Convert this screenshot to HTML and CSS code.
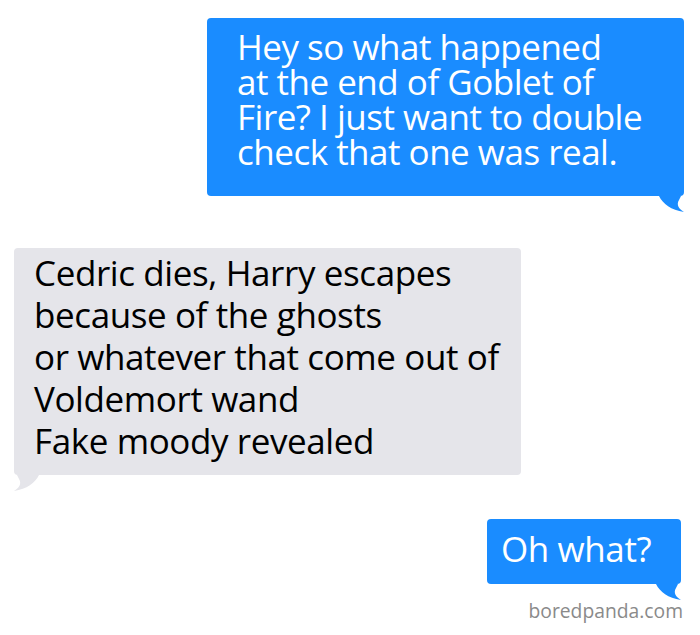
FILE: index.html
```html
<!DOCTYPE html>
<html>
<head>
<meta charset="utf-8">
<link rel="stylesheet" href="styles.css">
</head>
<body>
<div class="chat">
  <div class="bubble out big">
    <p>Hey so what happened<br>at the end of Goblet of<br>Fire? I just want to double<br>check that one was real.</p>
    <svg class="tail tail-out" width="28" height="18" viewBox="0 0 28 18"><path d="M2 0 C6 8 14 14 27 16 C22 13 19 9 22 4 L24 0 Z" fill="#1a8cff"/></svg>
  </div>
  <div class="bubble in">
    <p>Cedric dies, Harry escapes<br>because of the ghosts<br>or whatever that come out of<br>Voldemort wand<br>Fake moody revealed</p>
    <svg class="tail tail-in" width="28" height="18" viewBox="0 0 28 18"><path d="M26 0 C22 8 14 14 1 16 C6 13 9 9 6 4 L4 0 Z" fill="#e5e5ea"/></svg>
  </div>
  <div class="bubble out small">
    <p>Oh what?</p>
    <svg class="tail tail-out" width="28" height="18" viewBox="0 0 28 18"><path d="M2 0 C6 8 14 14 27 16 C22 13 19 9 22 4 L24 0 Z" fill="#1a8cff"/></svg>
  </div>
  <div class="credit">boredpanda.com</div>
</div>
</body>
</html>
```
FILE: styles.css
```css
html, body {
  margin: 0;
  padding: 0;
  background: #fff;
}
.chat {
  width: 700px;
  height: 635px;
  display: flex;
  flex-direction: column;
  font-family: "Open Sans", "Noto Sans", sans-serif;
}
.bubble {
  position: relative;
  border-radius: 4px;
}
.bubble p {
  margin: 0;
}
.out {
  background: #1a8cff;
  color: #fff;
  align-self: flex-end;
}
.in {
  background: #e5e5ea;
  color: #000;
  align-self: flex-start;
}
.big {
  margin: 18px 16px 0 0;
  width: 477px;
  height: 178px;
  box-sizing: border-box;
  padding: 11px 0 0 30px;
  font-size: 35px;
  line-height: 35px;
  letter-spacing: -0.5px;
}
.in {
  margin: 52px 0 0 14px;
  width: 507px;
  height: 227px;
  box-sizing: border-box;
  padding: 4px 0 0 20px;
  font-size: 35px;
  line-height: 42px;
  letter-spacing: -0.4px;
}
.small {
  margin: 44px 19px 0 0;
  width: 194px;
  height: 65px;
  box-sizing: border-box;
  padding: 9px 0 0 14px;
  font-size: 35px;
  line-height: 42px;
  letter-spacing: -0.4px;
}
.tail {
  position: absolute;
  top: 100%;
}
.tail-out {
  right: -1px;
}
.tail-in {
  left: -1px;
}
.credit {
  align-self: flex-end;
  margin: 16px 17px 0 0;
  font-size: 19.3px;
  color: #8a8a8a;
  line-height: 22px;
}
```
